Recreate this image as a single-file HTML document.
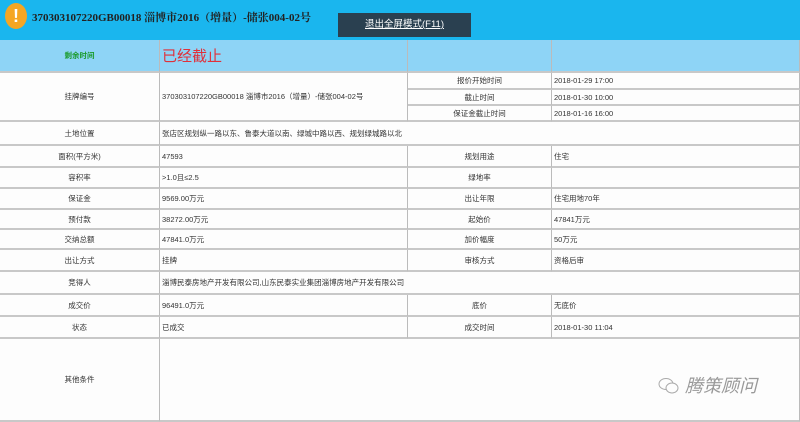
<!DOCTYPE html>
<html><head><meta charset="utf-8"><style>
body{margin:0;width:800px;height:422px;overflow:hidden;background:#fdfdfd;font-family:"Liberation Sans","Noto Sans CJK SC",sans-serif;font-size:7.5px;color:#333}
.hd{position:absolute;left:0;top:0;width:800px;height:40px;background:#1ab6ee}
.ic{position:absolute;left:5px;top:3px;width:22px;height:26px;border-radius:50%;background:#f5a623;color:#fff;font-weight:bold;font-size:18px;text-align:center;line-height:26px}
.tt{position:absolute;left:32px;top:9px;font-size:11px;color:#222;font-family:"Liberation Serif","Noto Serif CJK SC",serif;font-weight:bold}
.btn{position:absolute;left:338px;top:13px;width:133px;height:24px;background:#2a4050;color:#fff;font-size:9.5px;text-align:center;line-height:24px;text-decoration:underline}
.c{position:absolute;border-right:1px solid #bbb;border-bottom:2px solid #c8c8c8;box-sizing:border-box;display:flex;align-items:center;white-space:nowrap}
.l{justify-content:center}
.v{padding-left:2px}
.b{background:#8ed4f6}
</style></head><body>
<div class="hd"><div class="ic">!</div><div class="tt">370303107220GB00018 淄博市2016（增量）-储张004-02号</div><div class="btn">退出全屏模式(F11)</div></div>

<div class="c l b" style="left:0;top:40px;width:160px;height:33px;color:#1a9a2a;font-weight:bold">剩余时间</div>
<div class="c v b" style="left:160px;top:40px;width:248px;height:33px;color:#e0303a;font-size:15px">已经截止</div>
<div class="c b" style="left:408px;top:40px;width:144px;height:33px"></div>
<div class="c b" style="left:552px;top:40px;width:248px;height:33px"></div>

<div class="c l" style="left:0;top:73px;width:160px;height:49px">挂牌编号</div>
<div class="c v" style="left:160px;top:73px;width:248px;height:49px">370303107220GB00018 淄博市2016（增量）-储张004-02号</div>
<div class="c l" style="left:408px;top:73px;width:144px;height:17px">报价开始时间</div>
<div class="c v" style="left:552px;top:73px;width:248px;height:17px">2018-01-29 17:00</div>
<div class="c l" style="left:408px;top:90px;width:144px;height:16px">截止时间</div>
<div class="c v" style="left:552px;top:90px;width:248px;height:16px">2018-01-30 10:00</div>
<div class="c l" style="left:408px;top:106px;width:144px;height:16px">保证金截止时间</div>
<div class="c v" style="left:552px;top:106px;width:248px;height:16px">2018-01-16 16:00</div>

<div class="c l" style="left:0;top:122px;width:160px;height:24px">土地位置</div>
<div class="c v" style="left:160px;top:122px;width:640px;height:24px">张店区规划纵一路以东、鲁泰大道以南、绿城中路以西、规划绿城路以北</div>

<div class="c l" style="left:0;top:146px;width:160px;height:22px">面积(平方米)</div>
<div class="c v" style="left:160px;top:146px;width:248px;height:22px">47593</div>
<div class="c l" style="left:408px;top:146px;width:144px;height:22px">规划用途</div>
<div class="c v" style="left:552px;top:146px;width:248px;height:22px">住宅</div>

<div class="c l" style="left:0;top:168px;width:160px;height:21px">容积率</div>
<div class="c v" style="left:160px;top:168px;width:248px;height:21px">&gt;1.0且≤2.5</div>
<div class="c l" style="left:408px;top:168px;width:144px;height:21px">绿地率</div>
<div class="c v" style="left:552px;top:168px;width:248px;height:21px"></div>

<div class="c l" style="left:0;top:189px;width:160px;height:21px">保证金</div>
<div class="c v" style="left:160px;top:189px;width:248px;height:21px">9569.00万元</div>
<div class="c l" style="left:408px;top:189px;width:144px;height:21px">出让年限</div>
<div class="c v" style="left:552px;top:189px;width:248px;height:21px">住宅用地70年</div>

<div class="c l" style="left:0;top:210px;width:160px;height:20px">预付款</div>
<div class="c v" style="left:160px;top:210px;width:248px;height:20px">38272.00万元</div>
<div class="c l" style="left:408px;top:210px;width:144px;height:20px">起始价</div>
<div class="c v" style="left:552px;top:210px;width:248px;height:20px">47841万元</div>

<div class="c l" style="left:0;top:230px;width:160px;height:20px">交纳总额</div>
<div class="c v" style="left:160px;top:230px;width:248px;height:20px">47841.0万元</div>
<div class="c l" style="left:408px;top:230px;width:144px;height:20px">加价幅度</div>
<div class="c v" style="left:552px;top:230px;width:248px;height:20px">50万元</div>

<div class="c l" style="left:0;top:250px;width:160px;height:22px">出让方式</div>
<div class="c v" style="left:160px;top:250px;width:248px;height:22px">挂牌</div>
<div class="c l" style="left:408px;top:250px;width:144px;height:22px">审核方式</div>
<div class="c v" style="left:552px;top:250px;width:248px;height:22px">资格后审</div>

<div class="c l" style="left:0;top:272px;width:160px;height:23px">竞得人</div>
<div class="c v" style="left:160px;top:272px;width:640px;height:23px">淄博民泰房地产开发有限公司,山东民泰实业集团淄博房地产开发有限公司</div>

<div class="c l" style="left:0;top:295px;width:160px;height:22px">成交价</div>
<div class="c v" style="left:160px;top:295px;width:248px;height:22px">96491.0万元</div>
<div class="c l" style="left:408px;top:295px;width:144px;height:22px">底价</div>
<div class="c v" style="left:552px;top:295px;width:248px;height:22px">无底价</div>

<div class="c l" style="left:0;top:317px;width:160px;height:22px">状态</div>
<div class="c v" style="left:160px;top:317px;width:248px;height:22px">已成交</div>
<div class="c l" style="left:408px;top:317px;width:144px;height:22px">成交时间</div>
<div class="c v" style="left:552px;top:317px;width:248px;height:22px">2018-01-30 11:04</div>

<div class="c l" style="left:0;top:339px;width:160px;height:83px">其他条件</div>
<div class="c v" style="left:160px;top:339px;width:640px;height:83px"></div>
<div style="position:absolute;left:658px;top:372px;font-size:18px;color:#999;font-style:italic">
<svg width="22" height="18" viewBox="0 0 22 18" style="vertical-align:-3px"><ellipse cx="8" cy="7" rx="7" ry="5.5" fill="none" stroke="#aaa"/><ellipse cx="14" cy="11" rx="6" ry="5" fill="#fdfdfd" stroke="#aaa"/></svg> 腾策顾问</div>
</body></html>
